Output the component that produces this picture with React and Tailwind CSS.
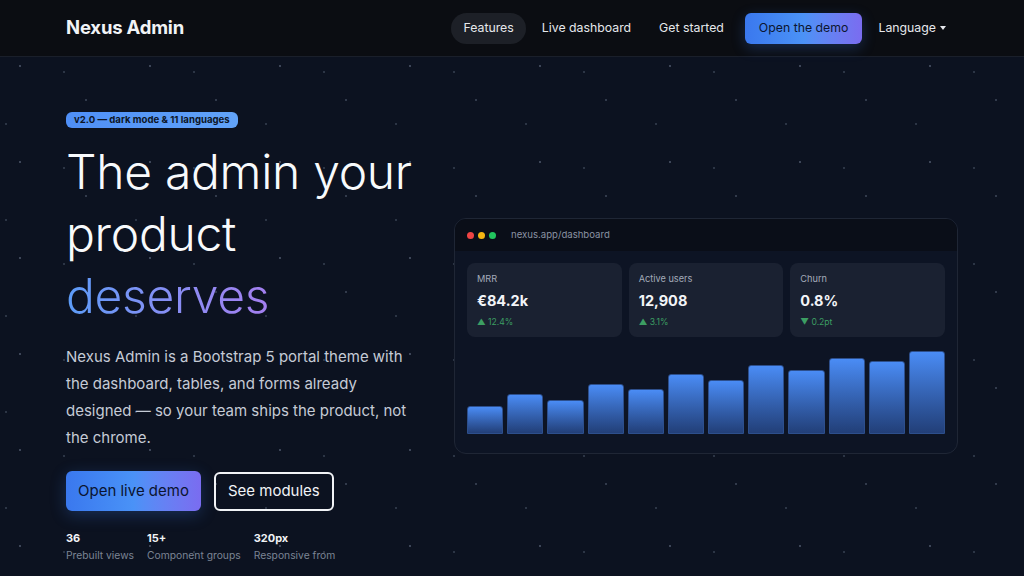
import React from 'react';

const navItems = ['Live dashboard', 'Get started'];

const stats = [
  { label: 'MRR', value: '€84.2k', delta: '▲ 12.4%' },
  { label: 'Active users', value: '12,908', delta: '▲ 3.1%' },
  { label: 'Churn', value: '0.8%', delta: '▼ 0.2pt' },
];

const bars = [28, 40, 34, 50, 45, 60, 54, 69, 64, 76, 73, 83];

const heroStats = [
  { value: '36', label: 'Prebuilt views' },
  { value: '15+', label: 'Component groups' },
  { value: '320px', label: 'Responsive from' },
];

function Navbar() {
  return (
    <nav className="h-[57px] bg-[#0b0d12] border-b border-[#1a1f2a] flex items-center justify-between px-[66px]">
      <a className="text-[18.5px] font-bold text-[#f1f3f6] tracking-[-0.2px]">Nexus Admin</a>
      <div className="flex items-center gap-1 text-[12.3px] text-[#e6e8ec]">
        <span className="h-[31px] flex items-center px-[12px] rounded-full bg-[#1d2027]">Features</span>
        {navItems.map((item) => (
          <span key={item} className="h-[31px] flex items-center px-3">{item}</span>
        ))}
        <span className="ml-[5px] h-[31px] flex items-center px-[14px] rounded-md text-[#0c1630] bg-gradient-to-r from-[#3a78ee] via-[#4b92f6] to-[#7a6cf0] shadow-[0_4px_14px_rgba(59,130,246,0.25)]">
          Open the demo
        </span>
        <span className="h-[31px] flex items-center px-3 gap-1">
          Language
          <span className="inline-block w-0 h-0 border-l-[3.5px] border-r-[3.5px] border-t-[4px] border-l-transparent border-r-transparent border-t-[#e6e8ec]"></span>
        </span>
      </div>
    </nav>
  );
}

function DashboardPreview() {
  return (
    <div className="mt-[161px] w-[504px] rounded-xl border border-[#1f2635] bg-[#0d1424] overflow-hidden">
      <div className="h-[32px] bg-[#0a0e18] flex items-center px-3 gap-[4px]">
        <span className="w-[7px] h-[7px] rounded-full bg-[#ef4444]"></span>
        <span className="w-[7px] h-[7px] rounded-full bg-[#f5b512]"></span>
        <span className="w-[7px] h-[7px] rounded-full bg-[#22c55e]"></span>
        <span className="ml-[11px] text-[9.6px] text-[#8a93a3]">nexus.app/dashboard</span>
      </div>
      <div className="px-[12px] pt-[12px] pb-[19px]">
        <div className="grid grid-cols-3 gap-[7px]">
          {stats.map((s) => (
            <div key={s.label} className="h-[74px] rounded-lg bg-[#1a2131] px-[10px] pt-[10px]">
              <div className="text-[9.2px] text-[#a3abb9] leading-[12px]">{s.label}</div>
              <div className="mt-[6px] text-[14.5px] font-bold text-[#f3f5f8] leading-[20px]">{s.value}</div>
              <div className="mt-[5px] text-[8.6px] text-[#3c9e63] leading-[12px]">{s.delta}</div>
            </div>
          ))}
        </div>
        <div className="mt-[7px] h-[90px] flex items-end gap-[4px]">
          {bars.map((h, i) => (
            <div
              key={i}
              className="flex-1 rounded-t-[3px] border border-[#2d4f8c] bg-gradient-to-b from-[#4a8cf5] to-[#223f78]"
              style={{ height: h + 'px' }}
            ></div>
          ))}
        </div>
      </div>
    </div>
  );
}

export default function App() {
  return (
    <div className="min-h-[576px] bg-[#0c1220] font-['Inter','Noto_Sans',sans-serif] overflow-hidden">
      <Navbar />
      <section className="h-[519px] bg-[#0c1220] [background-image:radial-gradient(circle,rgba(120,132,155,0.45)_0.8px,transparent_1.3px),radial-gradient(circle,rgba(120,132,155,0.35)_0.8px,transparent_1.3px),radial-gradient(circle,rgba(120,132,155,0.3)_0.8px,transparent_1.3px),radial-gradient(circle,rgba(120,132,155,0.3)_0.8px,transparent_1.3px)] [background-size:130px_96px,130px_96px,130px_96px,130px_96px] [background-position:-45px_-39px,21px_-5px,-59px_19px,-1px_-33px] flex items-start justify-between px-[66px]">
        <div className="w-[360px] pt-[48px]">
          <span className="inline-block rounded-md bg-gradient-to-r from-[#4f8ff7] to-[#62a3f8] px-2 h-[16px] leading-[16px] text-[9.6px] font-bold text-[#0d1526]">
            v2.0 — dark mode &amp; 11 languages
          </span>
          <h1 className="mt-[12px] text-[48px] leading-[62px] font-light text-[#f8fafc] tracking-[-0.3px]">
            The admin your product{' '}
            <span className="bg-gradient-to-r from-[#5b9cf8] to-[#a47ff0] bg-clip-text text-transparent">deserves</span>
          </h1>
          <p className="mt-[16px] text-[15px] leading-[27px] text-[#c5cbd6] w-[348px]">
            Nexus Admin is a Bootstrap 5 portal theme with the dashboard, tables, and forms already designed — so your team ships the product, not the chrome.
          </p>
          <div className="mt-[20px] flex items-center gap-[13px]">
            <button className="h-[40px] px-[12px] rounded-md text-[15px] text-[#0b1430] bg-gradient-to-r from-[#3a78ee] via-[#4a92f7] to-[#7a6cf0] shadow-[0_4px_16px_rgba(59,130,246,0.25)]">
              Open live demo
            </button>
            <button className="h-[39px] px-[12px] rounded-md border-2 border-[#f1f3f6] text-[15px] text-[#f1f3f6]">
              See modules
            </button>
          </div>
          <div className="mt-[19px] flex gap-[13px]">
            {heroStats.map((s) => (
              <div key={s.label}>
                <div className="text-[11px] font-bold text-[#f1f3f6] leading-[17px]">{s.value}</div>
                <div className="text-[10.3px] text-[#7b8494] leading-[17px]">{s.label}</div>
              </div>
            ))}
          </div>
        </div>
        <DashboardPreview />
      </section>
    </div>
  );
}
